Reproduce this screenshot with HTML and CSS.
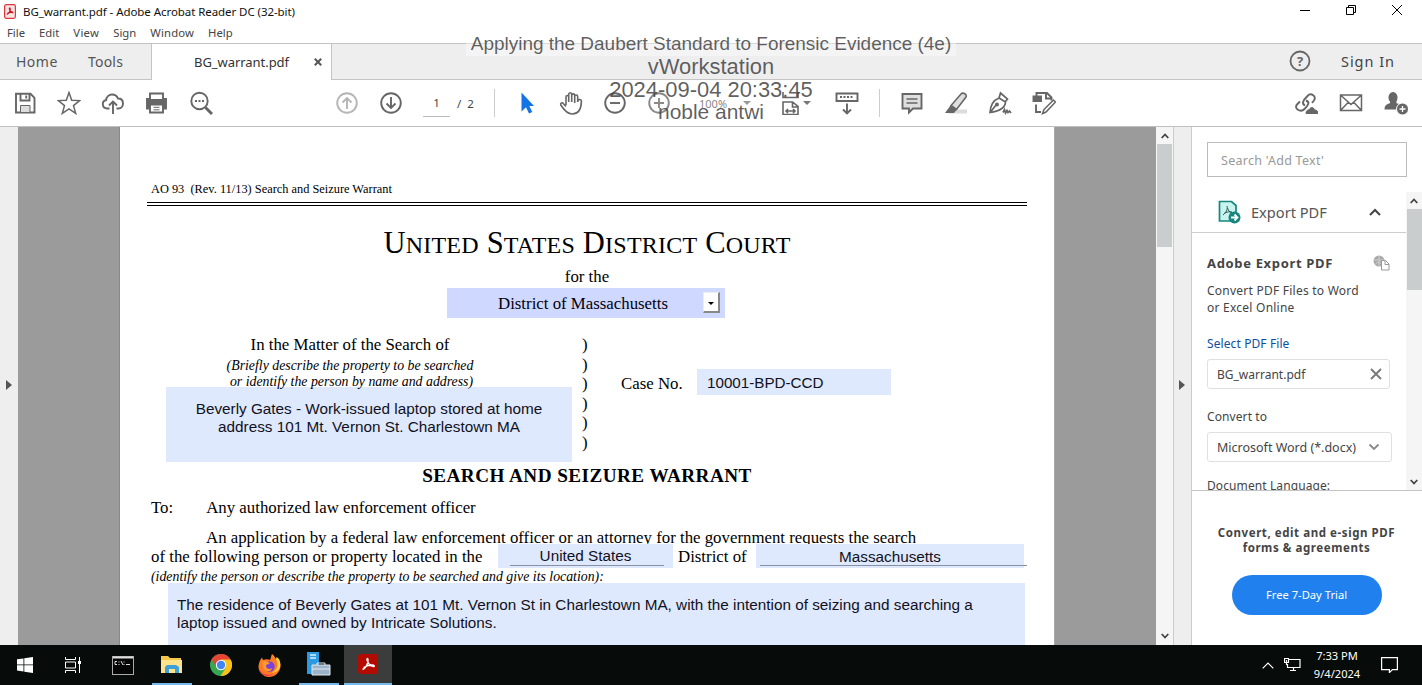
FILE: index.html
```html
<!DOCTYPE html>
<html lang="en">
<head>
<meta charset="utf-8">
<title>BG_warrant.pdf - Adobe Acrobat Reader DC (32-bit)</title>
<link rel="stylesheet" href="styles.css">
</head>
<body>
<header class="titlebar">
  <svg class="app-icon" viewBox="0 0 12 15"><rect x=".6" y=".6" width="10.8" height="13.8" rx="1.8" fill="#fbe3e3" stroke="#d8383d" stroke-width="1.2"/><path d="M2.800 10.500c2-1 3.600-3.600 3.300-5.900-.1-1-1-.7-.7.3.5 2 2 3.700 4 3.900M3.500 9.300c1.800-.9 3.500-1.300 5.500-1.100" fill="none" stroke="#c8161d" stroke-width="1.300"/></svg>
  <span class="win-title">BG_warrant.pdf - Adobe Acrobat Reader DC (32-bit)</span>
  <div class="win-controls">
    <svg viewBox="0 0 10 10"><path d="M0 5.500h10"/></svg>
    <svg viewBox="0 0 10 10"><path d="M.5 2.500h7v7h-7zM2.500 2.500v-2h7v7h-2"/></svg>
    <svg viewBox="0 0 10 10"><path d="M0 0l10 10M10 0L0 10"/></svg>
  </div>
</header>
<nav class="menubar"><span class="m-file">File</span><span class="m-edit">Edit</span><span class="m-view">View</span><span>Sign</span><span class="m-window">Window</span><span>Help</span></nav>
<div class="tabbar">
  <span class="tab-home">Home</span><span class="tab-tools">Tools</span>
  <div class="tab-active"><span>BG_warrant.pdf</span><svg viewBox="0 0 8 8"><path d="M.8.8l6.400 6.400M7.200.8L.8 7.200"/></svg></div>
  <div class="tab-right">
    <svg viewBox="0 0 22 22"><circle cx="11" cy="11" r="9.500"/><text x="11" y="15.500">?</text></svg>
    <span class="signin">Sign In</span>
  </div>
</div>
<div class="toolbar">
  <div class="group g-file">
    <svg viewBox="0 0 24 24"><path d="M3 2.800h14.500l4 4V21.500H3zM7.500 3v6.500h9V3M13.200 4.500v3"/><path class="soft" d="M7.500 21v-6.500h9.500V21"/></svg>
    <svg viewBox="0 0 24 24"><path d="M12 1.500l2.700 7.700 8 .4-6.200 5 2.200 7.800L12 17.800l-6.700 4.600 2.200-7.800-6.200-5 8-.4z" stroke-width="1.500"/></svg>
    <svg viewBox="0 0 24 24"><path d="M8.500 17.500H6.200a4.300 4.300 0 0 1-1-8.500C5.200 6 8 3.500 11 3.500c3 0 5 1.500 6 4 3 0 5 2 5 5s-2 5-4.500 5h-2M12 23V11M8 14.500l4-4 4 4"/></svg>
    <svg viewBox="0 0 24 24"><path class="solid" d="M2 8h19v9.500H2z"/><path d="M5 8V2.500h13V8" fill="#fff"/><path d="M5 13.500h13v8H5z" fill="#fff"/><path d="M8.500 16.300h6M8.500 18.800h6" stroke-width="1"/></svg>
    <svg viewBox="0 0 24 24"><circle cx="10.500" cy="10" r="8.200"/><path d="M16.500 16.500L23 23" stroke-width="3"/><path d="M6 10h2M9.500 10h2M13 10h2"/></svg>
  </div>
  <div class="group g-nav">
    <svg class="faded" viewBox="0 0 24 24"><circle cx="12" cy="12" r="9.800"/><path d="M12 18V7M7.500 11.500L12 7l4.500 4.500"/></svg>
    <svg viewBox="0 0 24 24"><circle cx="12" cy="12" r="9.800"/><path d="M12 6v11M7.500 12.500L12 17l4.500-4.500"/></svg>
  </div>
  <span class="page-no">1</span><span class="page-total">/&nbsp; 2</span>
  <i class="sep sep-a"></i>
  <div class="group g-view">
    <svg viewBox="0 0 24 24"><path d="M6.500 1.500v19l4.500-4.200 3 6.200 3.300-1.500-3-6h4.700z" fill="#1473e6" stroke="none"/></svg>
    <svg viewBox="0 0 24 24"><path d="M7 14V6c0-2 2.700-2 2.700 0v5V3.500c0-2.300 3-2.300 3 0V11 4.500c0-2.200 3-2.200 3 0V12 5.500c0-2 3-2 3 0V11c0-3.500 3.700-3 3.700-.5-.2 7.500-3 12.500-9.200 12.500C8 23 5 19 1.800 14c-.8-2 1.400-3 2.700-1.300L7 15.500" stroke-width="1.600"/></svg>
    <svg viewBox="0 0 24 24"><circle cx="12" cy="12" r="9.800"/><path d="M7 12h10"/></svg>
    <svg class="faded2" viewBox="0 0 24 24"><circle cx="12" cy="12" r="9.800"/><path d="M7 12h10M12 7v10"/></svg>
  </div>
  <span class="zoom">100%</span><i class="caret c1"></i>
  <svg class="fit" viewBox="0 0 24 24"><path d="M4 1v5.500h15V1M4 23.500V11h9.500l5.500 4.500v8zM13.500 11v5h5.500M7 20h9M9 18l-2 2 2 2M14 18l2 2-2 2" stroke-width="1.600"/></svg><i class="caret c2"></i>
  <svg class="scroll-icon" viewBox="0 0 24 24"><path d="M1.500 2.500h21v7.500h-21zM12 12.500v9.500M8 18.500l4 4 4-4"/><path d="M5 6h14" stroke-width="2" stroke-dasharray="2 1.500"/></svg>
  <i class="sep sep-b"></i>
  <div class="group g-edit">
    <svg viewBox="0 0 24 24"><path d="M2.500 3h19V17.500H13l-4 4v-4H2.500z" fill="#dedede"/><path d="M6.500 8h11M6.500 12h11" stroke-width="1.300"/></svg>
    <svg viewBox="0 0 24 24"><path d="M9 18.500h14v4H4z" fill="#dcdcdc" stroke="none"/><path d="M17 3c2-2 6.500.5 5 3L12.500 18.500 7 14.500z" fill="#dedede" stroke-width="1.600"/><path d="M6.500 14.500l6 4.500-2.500 3H1z" fill="#666" stroke="none"/></svg>
    <svg viewBox="0 0 24 24"><path d="M12.500 2l7 6-2 2.500c0 5-4.500 9.500-15.500 11 .5-9 4-12.500 9-14.500zM11 7l6.500 4M2.500 21l6-7.500M15 21.500l1.500-3 1 3.500 1.500-2.500 1 2 1.500-1.500 1.500 2" stroke-width="1.700"/><circle class="solid" cx="9" cy="13.500" r="1"/></svg>
    <svg viewBox="0 0 24 24"><path d="M4.500 5V2H15l4.500 4.500v3M14 2v5.500h5.500M4 13.500v7.500h5"/><path class="solid" d="M1.500 5.500h7.500v4.500h-7.500z"/><path d="M12 18.500l9.500-9.500 2 2L14 21l-3.500 1.500z" fill="#fff" stroke-width="1.500"/></svg>
  </div>
  <div class="group g-share">
    <svg viewBox="0 0 24 24"><path d="M11 14.500c-4-2-1.500-5.500 2.500-9.500 3.500-4 9.500.5 6.500 4.500l-2 2.300M12 9.500c4.500 1.500 2 5-1.500 8.500C6.500 22-.5 17.500 3 13.500l3-3"/><path d="M12 22.500c0-3 2-4 3-3.500 1.500-3.500 5-3 5.500 0 2 0 3.500 1 3.500 3.500z" fill="#666" stroke="#666" stroke-width="1"/></svg>
    <svg viewBox="0 0 24 24"><path d="M1.500 4h21v15.500h-21zM1.500 4L12 13.500 22.500 4M1.500 19.500l8-8.500M22.500 19.500l-8-8.500" stroke-width="1.500"/></svg>
    <svg viewBox="0 0 24 24"><ellipse class="solid" cx="9" cy="6.500" rx="3.600" ry="4.500"/><path class="solid" d="M1.500 17.500c0-3 3-4 5.500-4.500V10h4.500v3l3.500 1v3.500z"/><circle cx="18.500" cy="18" r="6" fill="#666" stroke="#fff" stroke-width="1"/><path d="M15.500 18h6M18.500 15v6" stroke="#fff" stroke-width="1.300"/></svg>
  </div>
</div>
<main class="workspace">
  <aside class="left-strip"><i></i></aside>
  <section class="canvas">
    <article class="page">
      <div class="form-no">AO 93&nbsp; (Rev. 11/13) Search and Seizure Warrant</div>
      <div class="rule"></div>
      <h1>U<small>NITED</small> S<small>TATES</small> D<small>ISTRICT</small> C<small>OURT</small></h1>
      <div class="for">for the</div>
      <div class="district"><span>District of Massachusetts</span><b><i></i></b></div>
      <div class="matter">
        <div class="matter-left">
          <div class="in-matter">In the Matter of the Search of</div>
          <div class="brief">(Briefly describe the property to be searched</div>
          <div class="brief last">or identify the person by name and address)</div>
          <div class="subject"><span>Beverly Gates - Work-issued laptop stored at home</span><span>address 101 Mt. Vernon St. Charlestown MA</span></div>
        </div>
        <div class="parens"><span>)</span><span>)</span><span>)</span><span>)</span><span>)</span><span>)</span></div>
        <div class="case"><span>Case No.</span><div>10001-BPD-CCD</div></div>
      </div>
      <h2>SEARCH AND SEIZURE WARRANT</h2>
      <div class="to"><span>To:</span><span class="any">Any authorized law enforcement officer</span></div>
      <div class="apply">An application by a federal law enforcement officer or an attorney for the government requests the search</div>
      <div class="located"><span class="loc">of the following person or property located in the</span><div class="f-us"><span>United States</span></div><span class="dist">District of</span><div class="f-ma"><span>Massachusetts</span></div></div>
      <div class="ident">(identify the person or describe the property to be searched and give its location):</div>
      <div class="residence"><span>The residence of Beverly Gates at 101 Mt. Vernon St in Charlestown MA, with the intention of seizing and searching a</span><span>laptop issued and owned by Intricate Solutions.</span></div>
    </article>
  </section>
  <div class="scrollbar doc-scroll"><svg viewBox="0 0 8 6"><path d="M.7 5L4 1.500 7.300 5"/></svg><i></i><svg viewBox="0 0 8 6"><path d="M.7 1L4 4.500 7.300 1"/></svg></div>
  <aside class="right-strip"><i></i></aside>
  <aside class="tools">
    <div class="search">Search 'Add Text'</div>
    <div class="pane">
      <div class="pane-body">
        <div class="export">
          <svg class="exp" viewBox="0 0 23 24"><path d="M1.500 1.500h12l4.500 4v15.500H1.500z" fill="#c9f3ee" stroke="#16867e" stroke-width="1.700"/><path d="M5 15c3-2 5-6 4-9M9.500 8c1 3 2.500 4.500 5 5M6 13.500c2-1.500 5-2 8-1.500" fill="none" stroke="#245b57"/><circle cx="16.500" cy="17.500" r="6" fill="#16867e"/><path d="M13 17.500h6M16.500 14.500l3 3-3 3" fill="none" stroke="#fff" stroke-width="1.800"/></svg>
          <span>Export PDF</span>
          <svg class="up" viewBox="0 0 12 8"><path d="M1 7l5-5 5 5"/></svg>
        </div>
        <div class="exp-head"><span>Adobe Export PDF</span><svg viewBox="0 0 17 16"><circle cx="6" cy="6" r="5.500" fill="#aaa"/><path d="M1 5h10M6 1v10M2.500 9c2-2 4-2 6 0" stroke="#ddd" fill="none" stroke-width=".7"/><path d="M8.500 5.500h4l3.500 3.500v6H8.500z" fill="#fff" stroke="#999"/><path d="M12 5.500V9.500h4" fill="none" stroke="#999"/></svg></div>
        <div class="exp-text"><span>Convert PDF Files to Word</span><span>or Excel Online</span></div>
        <div class="select">Select PDF File</div>
        <div class="file"><span>BG_warrant.pdf</span><svg viewBox="0 0 12 12"><path d="M1 1l10 10M11 1L1 11"/></svg></div>
        <div class="conv">Convert to</div>
        <div class="combo"><span>Microsoft Word (*.docx)</span><svg viewBox="0 0 12 8"><path d="M1.500 1.500L6 6l4.500-4.500"/></svg></div>
        <div class="lang">Document Language:</div>
      </div>
      <div class="scrollbar pane-scroll"><svg viewBox="0 0 8 6"><path d="M.7 5L4 1.500 7.300 5"/></svg><i></i><svg viewBox="0 0 8 6"><path d="M.7 1L4 4.500 7.300 1"/></svg></div>
    </div>
    <div class="promo"><span>Convert, edit and e-sign PDF</span><span>forms &amp; agreements</span><div class="trial">Free 7-Day Trial</div></div>
  </aside>
</main>
<footer class="taskbar">
  <div class="task"><svg width="16" height="16" viewBox="0 0 16 16"><path d="M0 2.300L6.500 1.400v6.100H0zM7.300 1.300L16 0v7.500H7.300zM0 8.300h6.500v6.200L0 13.600zM7.300 8.300H16V16l-8.700-1.300z" fill="#fff"/></svg></div>
  <div class="task"><svg width="17" height="16" viewBox="0 0 17 16"><path d="M.5 0v2.500h10V0M.5 16v-2.500h10V16M.5 5h10v6H.5zM14.500 0v16" fill="none" stroke="#fff"/><path d="M13 4h3v3h-3z" fill="#fff"/></svg></div>
  <div class="task"><svg width="22" height="19" viewBox="0 0 22 19"><rect x=".5" y=".5" width="21" height="18" fill="#050505" stroke="#aaa"/><path d="M1 1.500h20" stroke="#ddd" stroke-width="2"/><path d="M5 5.500H3v3h2M7 5.500v1M7 8v1M9 5l2 4M12 5.500v1M12 8v1M14 8.500h4" stroke="#ddd" fill="none"/></svg></div>
  <div class="task run"><svg width="22" height="19" viewBox="0 0 22 19"><path d="M0 1h7l2 2h11v14H0z" fill="#f5c84c"/><path d="M0 5h21v13H0z" fill="#ffe28a"/><path d="M4 18v-6l2-2h9l3 2v6h-4v-4H8v4z" fill="#3d9fdc"/></svg></div>
  <div class="task"><svg width="22" height="22" viewBox="0 0 22 22"><circle cx="11" cy="11" r="11" fill="#36a853"/><path d="M1.500 5.500A11 11 0 0 1 20.500 5.500L11 8z" fill="#e84335"/><path d="M1.500 5.500L7 14l4-6z" fill="#e84335"/><path d="M20.500 5.500H11l5 8-5.500 8.500A11 11 0 0 0 20.500 5.500z" fill="#fbc116"/><circle cx="11" cy="11" r="5.200" fill="#fff"/><circle cx="11" cy="11" r="4.200" fill="#4285f4"/></svg></div>
  <div class="task"><svg width="23" height="23" viewBox="0 0 23 23"><path d="M14 0c2 2 3 3 3.500 5 1-.5 1-1 1-2 3 3 4.500 6 4 10-1 6-6 10-11.500 10S0 18 .5 12C1 8 2.500 5 4 3.500L5 6c3-1 5-1 7 0 1-2 1-4 2-6z" fill="#ff7a22"/><path d="M14 0c2 3 4 4 5 8 2 6-2 9-5 11 8-1 10-8 7-14l-2.500-2v2C16 4 15 2 14 0z" fill="#ffd23c"/><path d="M1 11c0 9 8 11 14 9-6 5-15 0-14-9z" fill="#f0365b"/><circle cx="11.500" cy="12.500" r="5.200" fill="#7c43d8"/><path d="M4 8c3-2 5 0 8 1-2 2-4 1-4 3 0 3 4 4 6 2 0 4-8 5-9-1z" fill="#ff9a2b"/></svg></div>
  <div class="task run"><svg width="24" height="24" viewBox="0 0 24 24"><path d="M0 0h12v22H0z" fill="#2b9ae0"/><path d="M3 3h6M3 6h6" stroke="#d8f0ff" stroke-width="1.500"/><path d="M5 13h18v10H5z" fill="#9db4c8" stroke="#e0e8ee"/><path d="M10 13v-2h8v2M5 17h18" fill="none" stroke="#dfe9f0"/></svg></div>
  <div class="task run on"><svg width="20" height="20" viewBox="0 0 20 20"><rect width="20" height="20" rx="3" fill="#b30b00"/><path d="M4.500 15.500c3-1 6-6 5.500-10-.2-1.800-1.500-1-1 .5 1 3.500 3.500 6 6.500 6.500 1.500 0 .5-1.500-1-1.500-3 0-6 .8-9 2.500" fill="none" stroke="#fff" stroke-width="1.400"/></svg></div>
  <div class="tray">
    <svg width="12" height="7" viewBox="0 0 12 7"><path d="M.7 6.300L6 1l5.300 5.300"/></svg>
    <svg class="t-net" width="17" height="14" viewBox="0 0 17 14"><path d="M5 1.500h11v8H3.500V6M6 12.500h6M9.500 9.500v3M.5.500h4v4h-4zM2.500 2v5"/></svg>
    <div class="clock"><span>7:33 PM</span><span>9/4/2024</span></div>
    <svg class="t-msg" width="17" height="16" viewBox="0 0 17 16"><path d="M.6.600h15.800v12h-5l-3 3v-3H.6z"/></svg>
  </div>
</footer>
<div class="watermark"><span class="w1">Applying the Daubert Standard to Forensic Evidence (4e)</span><span class="w2">vWorkstation</span><span class="w2">2024-09-04 20:33:45</span><span class="w4">noble antwi</span></div>
</body>
</html>
```

FILE: styles.css
```css
* { box-sizing: border-box; }
body { margin: 0; width: 1422px; height: 685px; overflow: hidden; display: flex; flex-direction: column; background: #fff; font-family: "Noto Sans", sans-serif; color: #444; position: relative; }
span, .page div { white-space: nowrap; }
svg { display: block; flex: none; }

/* window chrome */
.titlebar { height: 24px; display: flex; align-items: center; padding: 0 0 2px 4px; color: #111; }
.app-icon { width: 12px; height: 15px; margin-right: 7px; }
.win-title { font-size: 11.500px; letter-spacing: -.066px; }
.win-controls { margin-left: auto; display: flex; gap: 36px; padding: 0 20px 2px 0; }
.win-controls svg { width: 10px; height: 10px; fill: none; stroke: #000; stroke-width: 1; }
.menubar { height: 19px; display: flex; padding-left: 7px; gap: 14px; font-size: 11.300px; line-height: 18px; }
.m-view { letter-spacing: .3px; }
.m-window { letter-spacing: .15px; }
.tabbar { height: 37px; display: flex; background: #eee; border-top: 1px solid #c4c4c4; border-bottom: 1px solid #c4c4c4; }
.tab-home, .tab-tools { font-size: 14px; line-height: 36px; margin-left: 16px; width: 42px; color: #555; letter-spacing: .5px; }
.tab-tools { margin-left: 30px; width: 35px; letter-spacing: .2px; }
.tab-active { height: 36px; margin-left: 28px; width: 181px; background: #fff; border-left: 1px solid #c4c4c4; border-right: 1px solid #c4c4c4; display: flex; align-items: center; padding-left: 42px; font-size: 13px; letter-spacing: -.05px; color: #333; }
.tab-active svg { width: 8px; height: 8px; margin-left: 25px; stroke: #555; stroke-width: 2; }
.tab-right { margin-left: auto; display: flex; align-items: center; padding: 0 27px 1px 0; gap: 30px; }
.tab-right svg { width: 22px; height: 22px; fill: none; stroke: #666; stroke-width: 1.800; }
.tab-right text { font: bold 13px "Open Sans", sans-serif; fill: #666; stroke: none; text-anchor: middle; }
.signin { font-size: 14.500px; color: #444; letter-spacing: .97px; }

/* toolbar */
.toolbar { height: 47px; border-bottom: 1px solid #c0c0c0; display: flex; align-items: center; padding: 0 14px 0 13px; }
.group { display: flex; gap: 20px; }
.toolbar svg { width: 24px; height: 24px; fill: none; stroke: #666; stroke-width: 1.900; }
.toolbar .solid { fill: #666; }
.toolbar .soft { fill: #ddd; stroke-width: 1; }
.toolbar .faded { stroke: #b5b5b5; }
.toolbar .faded2 { stroke: #8a8a8a; }
.g-nav { margin-left: 122px; }
.page-no { margin-left: 20px; width: 27px; height: 27px; border-bottom: 1px solid #bbb; text-align: center; font-size: 11.500px; line-height: 26px; }
.page-total { margin-left: 7px; font-size: 11.500px; width: 20px; }
.sep { width: 1px; height: 28px; background: #ccc; }
.sep-a { margin: 0 20px 0 17px; }
.zoom { margin-left: 28px; font-size: 11px; color: #888; }
.caret { border: 4px solid transparent; border-top-color: #777; border-bottom: 0; }
.c1 { margin-left: 16px; border-top-color: #999; }
.fit { margin-left: 28px; }
.scroll-icon { margin-left: 24px; }
.sep-b { margin: 0 20px; }
.g-share { margin-left: auto; gap: 21px; }

/* document area */
.workspace { height: 518px; display: flex; }
.left-strip { width: 18px; background: #eee; padding: 253px 0 0 6px; }
.left-strip i, .right-strip i { display: block; width: 0; border: 5px solid transparent; border-left: 6px solid #555; border-right: 0; }
.canvas { width: 1138px; background: #9b9b9b; overflow: hidden; }
.page { margin-left: 101px; width: 936px; height: 518px; overflow: hidden; background: #fff; border-left: 1px solid #888; border-right: 1px solid #aaa; color: #000; font-family: "Liberation Serif", serif; font-size: 16.820px; }
.form-no { margin-top: 53px; padding-left: 31px; height: 18px; font-size: 12.360px; line-height: 18px; }
.rule { margin: 4px 0 0 27px; width: 880px; height: 4px; border-top: 1px solid #000; border-bottom: 1px solid #000; }
.page h1 { margin: 19px 0 0; height: 36px; font-weight: normal; font-size: 30.500px; letter-spacing: .220px; line-height: 36px; text-align: center; }
.page h1 small { font-size: 24px; }
.for { margin-top: 6px; height: 20px; line-height: 20px; text-align: center; }
.district { margin: 1px 0 0 327px; width: 278px; height: 30px; background: #cfd9ff; color: #001; display: flex; padding-left: 51px; line-height: 31px; }
.district b { margin: 4px 5px 0 auto; width: 17px; height: 21px; background: #fff; border: 1px solid #eee; border-right: 2px solid #888; border-bottom: 2px solid #888; padding: 9px 0 0 4px; }
.district i { display: block; width: 0; border: 3px solid transparent; border-top-color: #000; border-bottom: 0; }
.matter { display: flex; height: 144px; }
.matter-left { width: 452px; padding: 17px 0 0 46px; }
.in-matter { height: 22px; line-height: 20px; width: 368px; text-align: center; }
.brief { height: 15px; line-height: 17px; width: 368px; text-align: center; font-style: italic; font-size: 13.820px; }
.brief.last { line-height: 19px; padding-left: 3px; }
.subject { width: 406px; height: 75px; background: #dfe9fd; font: 15.300px/18px "Liberation Sans", sans-serif; color: #112; display: flex; flex-direction: column; align-items: center; padding-top: 13px; }
.parens { width: 24px; padding: 17px 0 0 10px; display: grid; grid-auto-rows: 19.600px; line-height: 20px; }
.case { display: flex; height: 26px; margin: 51px 0 0 25px; line-height: 29px; }
.case div { margin-left: 15px; width: 194px; background: #dfe9fd; padding-left: 10px; font: 15.200px/27px "Liberation Sans", sans-serif; color: #112; }
.case span { width: 61px; }
.page h2 { margin: 4px 0 0; font-size: 19.200px; letter-spacing: .450px; line-height: 20px; text-align: center; height: 20px; }
.to { margin-top: 12px; height: 20px; line-height: 20px; display: flex; padding-left: 31px; }
.to .any { margin-left: 33px; }
.apply { margin-top: 10px; height: 16px; line-height: 20px; padding-left: 86px; }
.located { height: 24px; line-height: 26px; display: flex; padding-left: 31px; }
.loc { width: 332px; }
.f-us, .f-ma { background: #dfe9fd; font: 15.300px/23px "Liberation Sans", sans-serif; color: #112; height: 24px; text-align: center; }
.f-us { width: 175px; margin-left: 15px; }
.f-us span, .f-ma span { display: block; height: 22px; border-bottom: 1px solid #8890a8; }
.f-us span { width: 154px; margin-left: 12px; padding-right: 3px; }
.f-ma span { width: 267px; margin-left: 4px; line-height: 25px; padding-right: 7px; }
.dist { margin-left: 5px; width: 69px; }
.f-ma { width: 268px; margin-left: 9px; }
.ident { height: 15px; line-height: 17px; padding-left: 31px; font-style: italic; font-size: 13.820px; }
.residence { margin-left: 48px; width: 857px; height: 62px; background: #dfe9fd; font: 15.300px/18px "Liberation Sans", sans-serif; color: #112; display: flex; flex-direction: column; align-items: flex-start; padding: 13px 9px; }

.scrollbar { display: flex; flex-direction: column; align-items: center; background: #f5f5f5; }
.scrollbar svg { width: 8px; height: 6px; fill: none; stroke: #444; stroke-width: 1.800; }
.scrollbar i { background: #cacdcd; margin-bottom: auto; width: 15px; }
.doc-scroll { width: 17px; padding: 6px 0; }
.doc-scroll i { height: 103px; margin-top: 5px; }
.right-strip { width: 19px; background: #eee; border-left: 1px solid #ccc; border-right: 1px solid #ccc; padding: 253px 0 0 5px; }

/* tools panel */
.tools { width: 230px; display: flex; flex-direction: column; }
.search { margin: 15px 0 0 15px; width: 200px; height: 35px; border: 1px solid #bbb; font-size: 12.500px; letter-spacing: .27px; line-height: 35px; padding-left: 13px; color: #999; }
.pane { height: 314px; border-bottom: 1px solid #c4c4c4; display: flex; overflow: hidden; }
.pane-body { width: 214px; font-size: 12px; letter-spacing: .1px; overflow: hidden; }
.export { height: 56px; border-bottom: 1px solid #ccc; display: flex; align-items: center; padding: 15px 0 0 26px; font-size: 14.600px; letter-spacing: 0; color: #555; }
.exp { width: 23px; height: 24px; margin-right: 10px; }
.export span { width: 76px; }
.up { width: 12px; height: 8px; margin-left: 42px; fill: none; stroke: #444; stroke-width: 2; }
.exp-head { height: 30px; margin: 15px 0 0 15px; line-height: 30px; font-weight: bold; font-size: 13px; letter-spacing: .66px; display: flex; align-items: center; }
.exp-head svg { width: 17px; height: 16px; margin-left: 40px; }
.exp-text { margin: 4px 0 0 15px; display: grid; line-height: 17px; justify-items: start; letter-spacing: .24px; }
.select { margin: 19px 0 0 15px; line-height: 17px; color: #0d4f9e; }
.file, .combo { margin: 7px 0 0 15px; height: 30px; width: 183px; border: 1px solid #e0e0e0; border-radius: 3px; display: flex; align-items: center; padding-left: 9px; letter-spacing: 0; }
.file svg { width: 12px; height: 12px; margin-left: auto; margin-right: 7px; stroke: #777; stroke-width: 1.800; }
.combo { width: 185px; font-size: 12.500px; }
.combo svg { width: 12px; height: 8px; margin-left: auto; margin-right: 11px; fill: none; stroke: #888; stroke-width: 1.800; }
.conv { margin: 19px 0 0 15px; line-height: 17px; }
.lang { margin: 15px 0 0 15px; line-height: 17px; height: 13px; overflow: hidden; }
.pane-scroll { width: 16px; height: 298px; margin-top: 15px; padding: 6px 0 5px; }
.pane-scroll i { height: 81px; margin-top: 5px; }
.promo { flex: 1; display: flex; flex-direction: column; align-items: center; padding-top: 34px; font-weight: bold; font-size: 11.500px; letter-spacing: .57px; line-height: 15px; padding-right: 1px; }
.trial { margin-top: 20px; width: 150px; height: 40px; border-radius: 20px; background: #1f80ee; color: #fff; text-align: center; font-weight: normal; font-size: 11.200px; letter-spacing: 0; line-height: 39px; }

/* taskbar */
.taskbar { height: 40px; background: #070b0a; display: flex; }
.task { width: 49px; display: flex; align-items: center; justify-content: center; }
.run { width: 40px; margin: 0 4px 0 5px; border-bottom: 2px solid #76b9ed; }
.on { width: 48px; margin: 0 0 0 1px; background: #3a3d3c; }
.tray { margin-left: auto; display: flex; align-items: center; color: #fff; padding-right: 24px; }
.tray svg { fill: none; stroke: #fff; stroke-width: 1.200; }
.t-net { margin-left: 10px; }
.clock { display: flex; flex-direction: column; align-items: center; margin-left: 13px; width: 46px; font-size: 11.100px; line-height: 18px; }
.t-msg { margin-left: 21px; }

/* session stamp over the window */
.watermark { position: absolute; left: 465px; top: 33px; width: 492px; display: flex; flex-direction: column; align-items: center; font-family: "Liberation Sans", sans-serif; color: #3c3c3cd0; line-height: 22.800px; }
.w1 { font-size: 18.970px; background: #ffffff60; padding: 0 5px; }
.w2 { font-size: 21.930px; }
.w4 { font-size: 20.950px; }
```
